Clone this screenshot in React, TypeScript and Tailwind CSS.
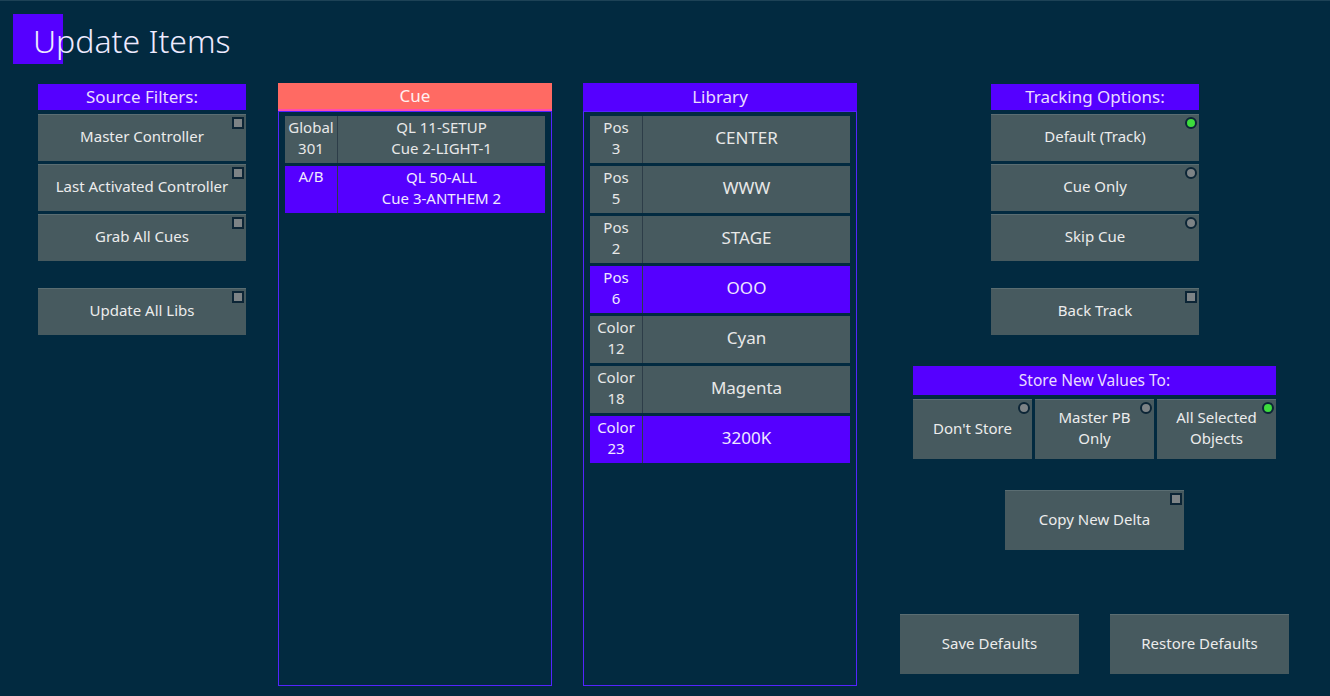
import React from "react";

const F = { fontFamily: '"Noto Sans", "Open Sans", sans-serif' };

function Ind({ kind }: { kind: "sq" | "off" | "on" }) {
  if (kind === "sq")
    return (
      <span className="absolute right-[2px] top-[2px] w-[12px] h-[12px] bg-[#7d8386] border-2 border-[#0c2536]" />
    );
  return (
    <span
      className={
        "absolute right-[2px] top-[2px] w-[12px] h-[12px] rounded-full border-2 border-[#0c2536] " +
        (kind === "on" ? "bg-[#3ddc3d]" : "bg-[#7d8386]")
      }
    />
  );
}

function Btn({
  label,
  ind,
  w,
  h,
  cls = "",
}: {
  label: React.ReactNode;
  ind?: "sq" | "off" | "on";
  w: string;
  h: string;
  cls?: string;
}) {
  return (
    <div
      className={
        "relative flex items-center justify-center text-center bg-[#475a5f] border-t border-[#5a6d72] text-[#ececec] text-[15px] leading-[21px] pb-[3px] " +
        w +
        " " +
        h +
        " " +
        cls
      }
    >
      {ind && <Ind kind={ind} />}
      <span>{label}</span>
    </div>
  );
}

function Header({ text, cls }: { text: string; cls: string }) {
  return (
    <div className={"flex items-center justify-center text-[#eadcff] " + cls}>
      {text}
    </div>
  );
}

function Row({
  a,
  b,
  active,
  bigB,
  topAlign,
}: {
  a: React.ReactNode;
  b: React.ReactNode;
  active?: boolean;
  bigB?: boolean;
  topAlign?: boolean;
}) {
  const bg = active ? "bg-[#5500ff]" : "bg-[#475a5f]";
  return (
    <div className="flex h-[47px] w-[260px]">
      <div
        className={
          "w-[53px] flex justify-center text-center text-[15px] leading-[21px] border-r border-[#2d3d48] " +
          bg +
          (topAlign ? " items-start pt-0" : " items-center pb-[4px]") +
          (active ? " text-[#f0e8ff]" : " text-[#e8e8e8]")
        }
      >
        <span>{a}</span>
      </div>
      <div
        className={
          "flex-1 flex items-center justify-center text-center pb-[4px] " +
          bg +
          (bigB ? " text-[17px]" : " text-[15px] leading-[21px]") +
          (active ? " text-[#f0e8ff]" : " text-[#e8e8e8]")
        }
      >
        <span>{b}</span>
      </div>
    </div>
  );
}

export default function App() {
  return (
    <div
      style={F}
      className="w-[1330px] h-[696px] bg-[#022a40] border-t border-[#1d4256] overflow-hidden"
    >
      {/* title */}
      <div className="h-[82px] flex items-start">
        <div className="relative ml-[13px] mt-[13px] h-[50px]">
          <div className="w-[50px] h-[50px] bg-[#5500ff]" />
          <div className="absolute left-[20px] top-[5px] whitespace-nowrap text-[32px] font-light text-[#eeeaff] leading-[44px]">
            Update Items
          </div>
        </div>
      </div>

      <div className="flex">
        {/* left column */}
        <div className="ml-[38px] w-[208px] flex flex-col pt-[1px]">
          <Header text="Source Filters:" cls="h-[26px] bg-[#5500ff] text-[17px]" />
          <div className="mt-[4px] flex flex-col gap-[3px]">
            <Btn label="Master Controller" ind="sq" w="w-[208px]" h="h-[47px]" />
            <Btn label="Last Activated Controller" ind="sq" w="w-[208px]" h="h-[47px]" />
            <Btn label="Grab All Cues" ind="sq" w="w-[208px]" h="h-[47px]" />
          </div>
          <Btn label="Update All Libs" ind="sq" w="w-[208px]" h="h-[47px]" cls="mt-[27px]" />
        </div>

        {/* cue */}
        <div className="ml-[32px] w-[274px] flex flex-col">
          <div className="h-[28px] bg-[#ff6a63] border-b-2 border-[#ff4ab0] flex items-center justify-center text-[#fff0f0] text-[17px]">
            Cue
          </div>
          <div className="h-[575px] border border-[#5324ff] flex flex-col items-center pt-[4px] gap-[3px]">
            <Row a={<>Global<br />301</>} b={<>QL 11-SETUP<br />Cue 2-LIGHT-1</>} />
            <Row a="A/B" b={<>QL 50-ALL<br />Cue 3-ANTHEM 2</>} active topAlign />
          </div>
        </div>

        {/* library */}
        <div className="ml-[31px] w-[274px] flex flex-col">
          <div className="h-[28px] bg-[#5500ff] flex items-center justify-center text-[#eadcff] text-[17px]">
            Library
          </div>
          <div className="h-[575px] border border-[#5324ff] flex flex-col items-center pt-[4px] gap-[3px]">
            <Row a={<>Pos<br />3</>} b="CENTER" bigB />
            <Row a={<>Pos<br />5</>} b="WWW" bigB />
            <Row a={<>Pos<br />2</>} b="STAGE" bigB />
            <Row a={<>Pos<br />6</>} b="OOO" bigB active />
            <Row a={<>Color<br />12</>} b="Cyan" bigB />
            <Row a={<>Color<br />18</>} b="Magenta" bigB />
            <Row a={<>Color<br />23</>} b="3200K" bigB active />
          </div>
        </div>

        {/* right */}
        <div className="flex-1 flex flex-col">
          <div className="ml-[134px] w-[208px] flex flex-col pt-[1px]">
            <Header text="Tracking Options:" cls="h-[26px] bg-[#5500ff] text-[17px]" />
            <div className="mt-[4px] flex flex-col gap-[3px]">
              <Btn label="Default (Track)" ind="on" w="w-[208px]" h="h-[47px]" />
              <Btn label="Cue Only" ind="off" w="w-[208px]" h="h-[47px]" />
              <Btn label="Skip Cue" ind="off" w="w-[208px]" h="h-[47px]" />
            </div>
            <Btn label="Back Track" ind="sq" w="w-[208px]" h="h-[47px]" cls="mt-[27px]" />
          </div>

          <div className="ml-[56px] mt-[31px] w-[363px] flex flex-col">
            <Header text="Store New Values To:" cls="h-[29px] bg-[#5500ff] text-[15.5px]" />
            <div className="mt-[4px] flex gap-[3px]">
              <Btn label="Don't Store" ind="off" w="w-[119px]" h="h-[60px]" />
              <Btn label={<>Master PB<br />Only</>} ind="off" w="w-[119px]" h="h-[60px]" />
              <Btn label={<>All Selected<br />Objects</>} ind="on" w="w-[119px]" h="h-[60px]" />
            </div>
          </div>

          <Btn label="Copy New Delta" ind="sq" w="w-[179px]" h="h-[60px]" cls="ml-[148px] mt-[31px]" />

          <div className="ml-[43px] mt-[64px] flex gap-[31px]">
            <Btn label="Save Defaults" w="w-[179px]" h="h-[60px]" />
            <Btn label="Restore Defaults" w="w-[179px]" h="h-[60px]" />
          </div>
        </div>
      </div>
    </div>
  );
}
